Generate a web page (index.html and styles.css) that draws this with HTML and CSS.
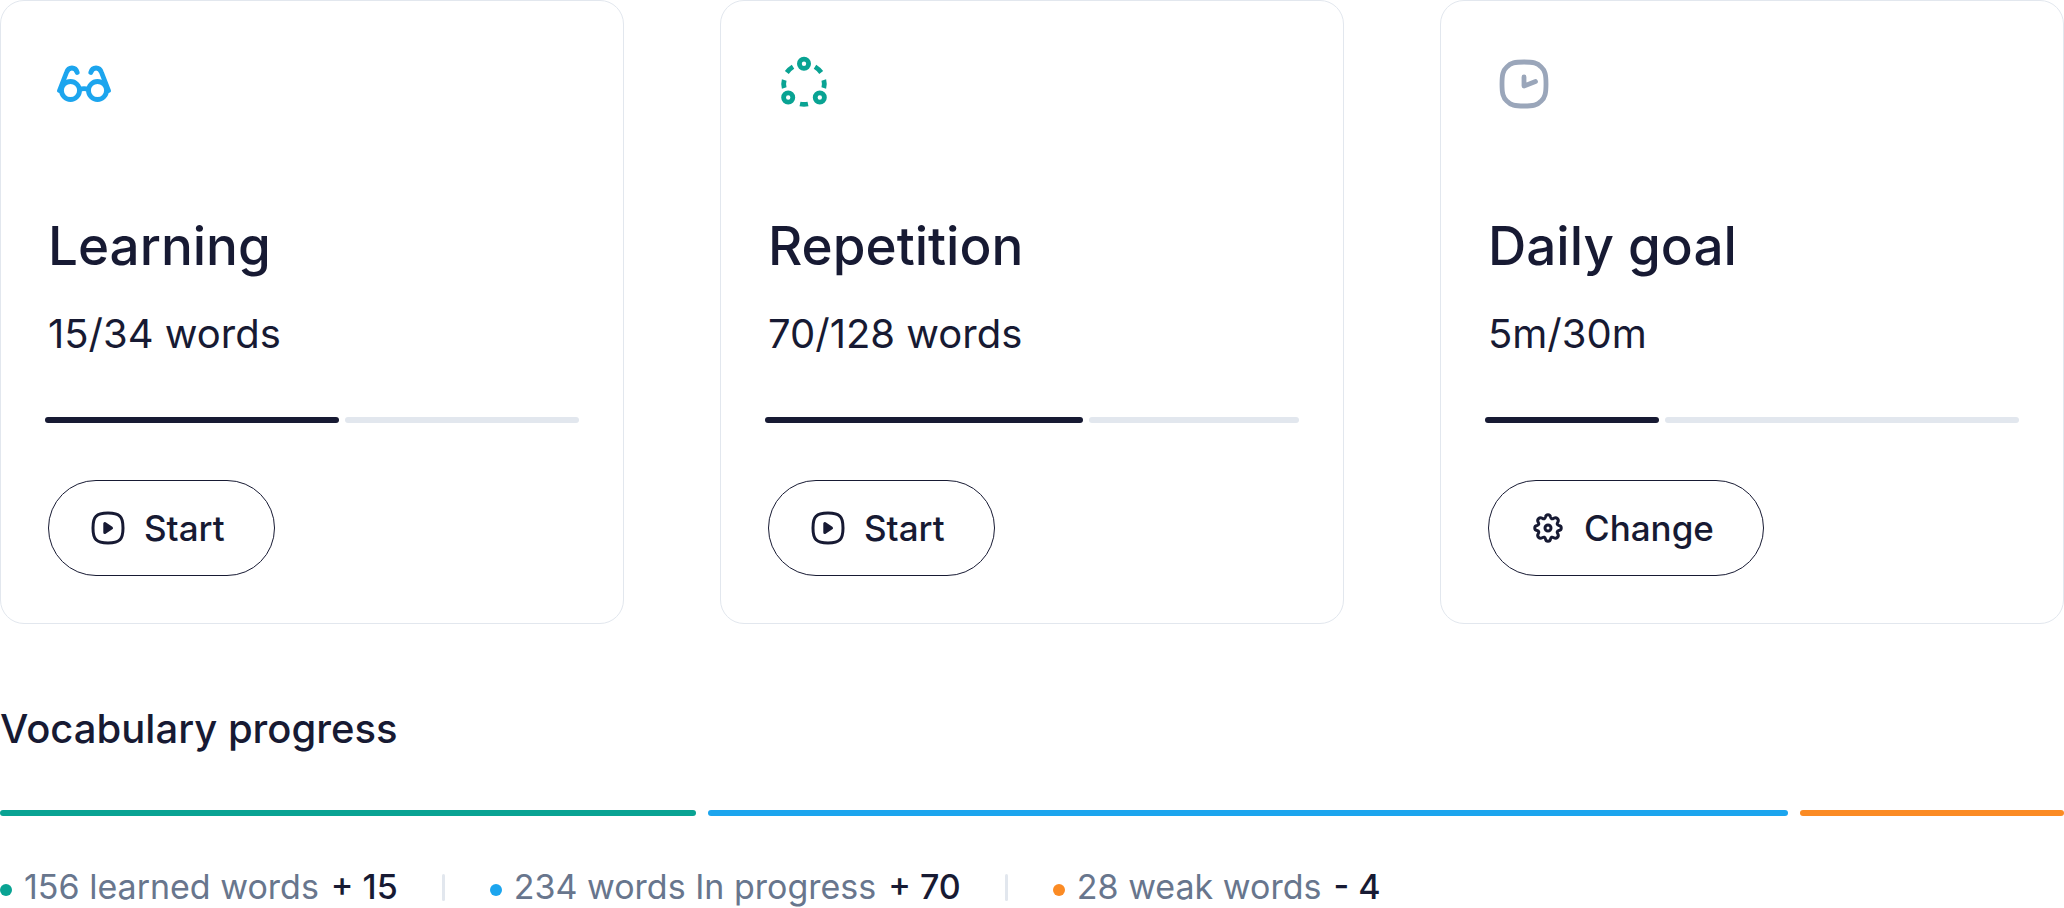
FILE: index.html
```html
<!DOCTYPE html>
<html lang="en">
<head>
<meta charset="utf-8">
<title>Vocabulary</title>
<link rel="stylesheet" href="styles.css">
</head>
<body>
<main class="dashboard">
  <section class="cards">
    <article class="card">
      <svg class="card-icon card-icon-blue" viewBox="0 0 72 72" aria-hidden="true">
        <g fill="none" stroke="currentColor" stroke-width="4.800" stroke-linecap="round" stroke-linejoin="round">
          <circle cx="22.500" cy="42.500" r="9"/><circle cx="49.500" cy="42.500" r="9"/>
          <path d="M31.500 41.500C34 40.500 38 40.500 40.500 41.500M11.500 42.500L18.500 24.500C20.500 18.500 27.500 18.500 29.200 24.500M60.500 42.500L53.500 24.500C51.500 18.500 44.500 18.500 42.800 24.500"/>
        </g>
      </svg>
      <h2 class="card-title">Learning</h2>
      <p class="card-value">15/34 words</p>
      <div class="meter" role="img" aria-label="Learning progress"><span class="meter-done" style="flex-grow:294"></span><span class="meter-rest" style="flex-grow:234"></span></div>
      <button class="action" type="button">
        <svg class="action-icon" viewBox="0 0 36 36" aria-hidden="true"><path d="M18 3C24 3 27.500 3.600 29.800 6.200C32.400 8.500 33 12 33 18S32.400 27.500 29.800 29.800C27.500 32.400 24 33 18 33S8.500 32.400 6.200 29.800C3.600 27.500 3 24 3 18S3.600 8.500 6.200 6.200C8.500 3.600 12 3 18 3Z" fill="none" stroke="currentColor" stroke-width="3"/><path d="M14.800 13.500V22.500L21.500 18Z" fill="currentColor" stroke="currentColor" stroke-width="3" stroke-linejoin="round"/></svg>
        Start
      </button>
    </article>
    <article class="card">
      <svg class="card-icon card-icon-green" viewBox="0 0 72 72" aria-hidden="true">
        <g fill="none" stroke="currentColor" stroke-width="4.800">
          <circle cx="36" cy="15.800" r="4.600"/><circle cx="20.200" cy="49.500" r="4.600"/><circle cx="51.800" cy="49.500" r="4.600"/>
          <path d="M18.800 24.500Q21.500 20.800 25 18.700M47 18.700Q50.500 20.800 53.200 24.500M16.200 40Q15.100 36 16.200 32M55.800 40Q56.900 36 55.800 32M32 56Q36 56.800 40 56"/>
        </g>
      </svg>
      <h2 class="card-title">Repetition</h2>
      <p class="card-value">70/128 words</p>
      <div class="meter" role="img" aria-label="Repetition progress"><span class="meter-done" style="flex-grow:318"></span><span class="meter-rest" style="flex-grow:210"></span></div>
      <button class="action" type="button">
        <svg class="action-icon" viewBox="0 0 36 36" aria-hidden="true"><path d="M18 3C24 3 27.500 3.600 29.800 6.200C32.400 8.500 33 12 33 18S32.400 27.500 29.800 29.800C27.500 32.400 24 33 18 33S8.500 32.400 6.200 29.800C3.600 27.500 3 24 3 18S3.600 8.500 6.200 6.200C8.500 3.600 12 3 18 3Z" fill="none" stroke="currentColor" stroke-width="3"/><path d="M14.800 13.500V22.500L21.500 18Z" fill="currentColor" stroke="currentColor" stroke-width="3" stroke-linejoin="round"/></svg>
        Start
      </button>
    </article>
    <article class="card">
      <svg class="card-icon card-icon-grey" viewBox="0 0 72 72" aria-hidden="true">
        <g fill="none" stroke="currentColor" stroke-width="4.800" stroke-linecap="round" stroke-linejoin="round">
          <path d="M36 14C45 14 49.500 14.800 53 18.800C57.200 22.500 58 27 58 36S57.200 49.500 53 53.200C49.500 57.200 45 58 36 58S22.500 57.200 19 53.200C14.800 49.500 14 45 14 36S14.800 22.500 19 18.800C22.500 14.800 27 14 36 14Z"/>
          <path d="M36 29V38L47.500 33.500"/>
        </g>
      </svg>
      <h2 class="card-title">Daily goal</h2>
      <p class="card-value">5m/30m</p>
      <div class="meter" role="img" aria-label="Daily goal progress"><span class="meter-done" style="flex-grow:174"></span><span class="meter-rest" style="flex-grow:354"></span></div>
      <button class="action" type="button">
        <svg class="action-icon" viewBox="0 0 36 36" aria-hidden="true"><g fill="none" stroke="currentColor" stroke-width="3" stroke-linejoin="round"><circle cx="18" cy="18" r="3"/><path d="M15.500 7C16 4 20 4 20.500 7C21 9 22 9.300 23.800 8.200C26.500 6.600 29.400 9.500 27.800 12.200C26.700 14 27 15 29 15.500C32 16 32 20 29 20.500C27 21 26.700 22 27.800 23.800C29.400 26.500 26.500 29.400 23.800 27.800C22 26.700 21 27 20.500 29C20 32 16 32 15.500 29C15 27 14 26.700 12.200 27.800C9.500 29.400 6.600 26.500 8.200 23.800C9.300 22 9 21 7 20.500C4 20 4 16 7 15.500C9 15 9.300 14 8.200 12.200C6.600 9.500 9.500 6.600 12.200 8.200C14 9.300 15 9 15.500 7Z"/></g></svg>
        Change
      </button>
    </article>
  </section>
  <section class="vocabulary">
    <h3 class="vocabulary-title">Vocabulary progress</h3>
    <div class="split" role="img" aria-label="Learned, in progress and weak words">
      <span class="split-part green" style="flex-grow:696"></span><span class="split-part blue" style="flex-grow:1080"></span><span class="split-part orange" style="flex-grow:264"></span>
    </div>
    <ul class="stats">
      <li class="stat"><span class="dot green"></span><span>156 learned words</span><span class="delta">+ 15</span></li>
      <li class="stat"><span class="dot blue"></span><span>234 words In progress</span><span class="delta">+ 70</span></li>
      <li class="stat"><span class="dot orange"></span><span>28 weak words</span><span class="delta">- 4</span></li>
    </ul>
  </section>
</main>
</body>
</html>
```
FILE: styles.css
```css
* { box-sizing: border-box; }
body { margin: 0; background: #fff; color: #171a33; font-family: Inter, "Liberation Sans", sans-serif; }
h2, h3, p, ul { margin: 0; padding: 0; }

.cards { display: grid; grid-template-columns: repeat(3, 1fr); gap: 96px; }
.card { display: flex; flex-direction: column; align-items: flex-start; padding: 47px; border: 1px solid #e2e7ee; border-radius: 24px; }
.card-icon { width: 72px; height: 72px; }
.card-icon-blue { color: #1ca5ee; }
.card-icon-green { color: #09a393; }
.card-icon-grey { color: #9aa6ba; }
.card-title { margin-top: 90px; font-size: 53px; line-height: 72px; font-weight: 500; }
.card-value { margin-top: 25px; font-size: 40px; line-height: 54px; }
.meter { display: flex; gap: 6px; align-self: stretch; height: 6px; margin: 56px -3px 57px; }
.meter-done, .meter-rest { flex-basis: 0; border-radius: 3px; }
.meter-done { background: #171a33; }
.meter-rest { background: #e2e7ee; }
.action { display: flex; align-items: center; gap: 18px; height: 96px; padding: 0 49px 0 41px; border: 1px solid #171a33; border-radius: 48px; background: #fff; color: inherit; font-family: inherit; font-size: 35px; line-height: 48px; font-weight: 500; }
.action-icon { width: 36px; height: 36px; }

.vocabulary { margin-top: 78px; }
.vocabulary-title { font-size: 40px; line-height: 54px; font-weight: 500; }
.split { display: flex; gap: 12px; height: 6px; margin-top: 54px; }
.split-part { flex-basis: 0; border-radius: 3px; }
.green { background: #09a393; }
.blue { background: #1ca5ee; }
.orange { background: #fb8b24; }
.stats { display: flex; margin-top: 50px; list-style: none; font-size: 34px; line-height: 42px; color: #68768d; }
.stat { display: flex; align-items: center; gap: 12px; white-space: nowrap; }
.stat + .stat::before { content: ""; width: 3px; height: 27px; margin: 0 33px 0 44px; border-radius: 2px; background: #e2e7ee; }
.dot { width: 12px; height: 12px; margin-top: 6px; border-radius: 50%; }
.delta { color: #171a33; font-weight: 500; }
```
